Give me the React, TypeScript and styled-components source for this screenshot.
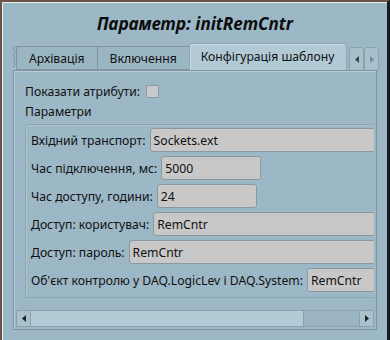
import React from 'react'
import styled, { createGlobalStyle } from 'styled-components'

const GlobalStyle = createGlobalStyle`
  html, body {
    margin: 0;
    padding: 0;
    background: #9cb8c6;
  }
  body {
    font-family: "Noto Sans", "DejaVu Sans", sans-serif;
    font-size: 12.2px;
    color: #111;
  }
`

const Window = styled.div`
  box-sizing: border-box;
  width: 390px;
  height: 340px;
  background: #9cb8c6;
  border-top: 2px solid #6e5446;
  border-left: 2px solid #6e5446;
  border-right: 3px solid #1a1d1f;
  display: flex;
  flex-direction: column;
  padding: 0 10px 10px 11px;
  box-shadow: inset 0 1px 0 #e6f0f4, inset 1px 0 0 #e6f0f4;
`

const Title = styled.div`
  font-size: 17px;
  font-weight: 700;
  font-style: italic;
  text-align: center;
  height: 42px;
  line-height: 44px;
  color: #0c0c0c;
`

const TabBar = styled.div`
  display: flex;
  align-items: flex-end;
  height: 26px;
  padding-left: 0;
`

const Tear = styled.div`
  width: 3px;
  height: 22px;
  align-self: flex-end;
  margin-bottom: 2px;
  svg { display: block; }
`

const Tab = styled.div<{ $active?: boolean }>`
  box-sizing: border-box;
  height: ${({ $active }) => ($active ? '27px' : '24px')};
  padding: 0 ${({ $active }) => ($active ? '12px' : '12px')};
  padding-left: ${({ $active }) => ($active ? '11px' : '12px')};
  display: flex;
  align-items: center;
  background: ${({ $active }) => ($active ? '#b1cad6' : '#9bb6c3')};
  border: 1px solid ${({ $active }) => ($active ? '#8ea6b1' : '#7f949e')};
  border-bottom: ${({ $active }) => ($active ? 'none' : '1px solid #7f949e')};
  border-radius: ${({ $active }) => ($active ? '3px 3px 0 0' : '0')};
  margin-right: -1px;
  white-space: nowrap;
  box-shadow: ${({ $active }) => ($active ? 'inset 1px 1px 0 #c9dbe3' : 'none')};
  padding-bottom: ${({ $active }) => ($active ? '2px' : '0')};
`

const TabScroll = styled.div`
  display: flex;
  margin-left: 3px;
  margin-bottom: -2px;
`

const ScrollBtn = styled.div`
  box-sizing: border-box;
  width: 15px;
  height: 25px;
  border: 1px solid #8ba2ad;
  border-radius: 3px;
  background: #a6c0cc;
  display: flex;
  align-items: center;
  justify-content: center;
  svg { display: block; }
`

const Panel = styled.div`
  flex: 1;
  box-sizing: border-box;
  border: 1px solid #7f949e;
  box-shadow: inset 1px 1px 0 #b7ccd6;
  padding: 2px;
  display: flex;
  flex-direction: column;
  min-height: 0;
`

const Viewport = styled.div`
  flex: 1;
  overflow: hidden;
  position: relative;
  min-height: 0;
`

const Content = styled.div`
  width: 430px;
  padding: 8px 0 0 9px;
  box-sizing: border-box;
`

const CheckRow = styled.div`
  display: flex;
  align-items: center;
  height: 20px;
  gap: 6px;
`

const Check = styled.div`
  width: 11px;
  height: 11px;
  border: 1px solid #8b9aa2;
  background: #c7c9ca;
  border-radius: 1px;
`

const Section = styled.div`
  height: 22px;
  line-height: 22px;
`

const Group = styled.div`
  margin-top: 1px;
  border: 1px solid #8fa6b1;
  border-radius: 2px;
  box-shadow: inset 1px 1px 0 #acc4cf;
  padding: 3px 6px 5px 5px;
  display: flex;
  flex-direction: column;
  gap: 4px;
`

const Row = styled.div`
  display: flex;
  align-items: center;
  height: 24px;
  gap: 4px;
  white-space: nowrap;
`

const Field = styled.div<{ $w?: number }>`
  box-sizing: border-box;
  height: 24px;
  ${({ $w }) => ($w ? `width: ${$w}px;` : 'flex: 1;')}
  background: #c8c8c8;
  border: 1px solid #8a99a1;
  border-radius: 3px;
  padding: 0 3px;
  display: flex;
  align-items: center;
`

const HScroll = styled.div`
  height: 15px;
  display: flex;
  border: 1px solid #8ba2ad;
  background: #97b1be;
  margin-top: 2px;
`

const ArrowBox = styled.div`
  width: 13px;
  display: flex;
  align-items: center;
  justify-content: center;
  background: #a9c2ce;
  svg { display: block; }
`

const Handle = styled.div`
  width: 272px;
  background: #b3cbd6;
  border-left: 1px solid #8ba2ad;
  border-right: 1px solid #8ba2ad;
`

const Trough = styled.div`
  flex: 1;
  background: #9bb4c1;
  border-right: 1px solid #8ba2ad;
`

const Tri = ({ dir, color = '#1d2226' }: { dir: 'l' | 'r'; color?: string }) => (
  <svg width="4" height="7" viewBox="0 0 4 7">
    <polygon points={dir === 'l' ? '4,0 4,7 0,3.5' : '0,0 0,7 4,3.5'} fill={color} />
  </svg>
)

const rows: { label: string; value: string; w?: number }[] = [
  { label: 'Вхідний транспорт:', value: 'Sockets.ext' },
  { label: 'Час підключення, мс:', value: '5000', w: 100 },
  { label: 'Час доступу, години:', value: '24', w: 100 },
  { label: 'Доступ: користувач:', value: 'RemCntr' },
  { label: 'Доступ: пароль:', value: 'RemCntr' },
  { label: "Об'єкт контролю у DAQ.LogicLev і DAQ.System:", value: 'RemCntr' },
]

export default function App() {
  return (
    <>
      <GlobalStyle />
      <Window>
        <Title>Параметр: initRemCntr</Title>
        <TabBar>
          <Tear>
            <svg width="3" height="22" viewBox="0 0 3 22">
              <path d="M2 0 L0.5 3 L2 6 L0.5 9 L2 12 L0.5 15 L2 18 L0.5 21" stroke="#7f949e" fill="none" />
            </svg>
          </Tear>
          <Tab>Архівація</Tab>
          <Tab>Включення</Tab>
          <Tab $active>Конфігурація шаблону</Tab>
          <TabScroll>
            <ScrollBtn><Tri dir="l" color="#3a4348" /></ScrollBtn>
            <ScrollBtn><Tri dir="r" color="#7b8b93" /></ScrollBtn>
          </TabScroll>
        </TabBar>
        <Panel>
          <Viewport>
            <Content>
              <CheckRow>
                <span>Показати атрибути:</span>
                <Check />
              </CheckRow>
              <Section>Параметри</Section>
              <Group>
                {rows.map((r) => (
                  <Row key={r.label}>
                    <span>{r.label}</span>
                    <Field $w={r.w}>{r.value}</Field>
                  </Row>
                ))}
              </Group>
            </Content>
          </Viewport>
          <HScroll>
            <ArrowBox><Tri dir="l" /></ArrowBox>
            <Handle />
            <Trough />
            <ArrowBox><Tri dir="r" /></ArrowBox>
          </HScroll>
        </Panel>
      </Window>
    </>
  )
}
